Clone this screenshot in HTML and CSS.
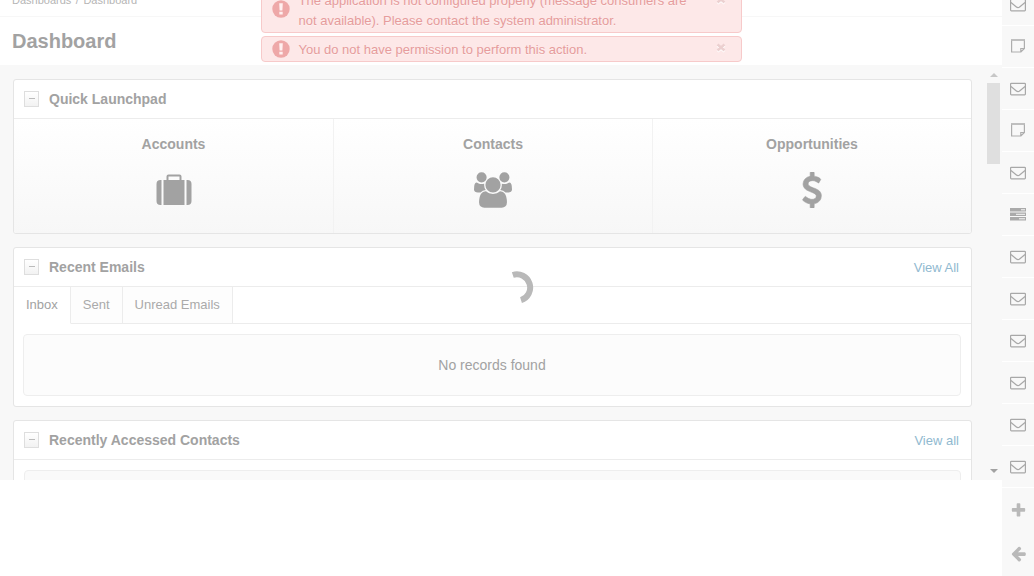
FILE: index.html
```
<!DOCTYPE html>
<html lang="en">
<head>
<meta charset="utf-8">
<title>Dashboard</title>
<link rel="stylesheet" href="styles.css">
</head>
<body>
<svg class="defs" aria-hidden="true">
  <symbol id="mail" viewBox="0 0 16 14"><rect x=".6" y="1.300" width="14.800" height="11.600" rx=".8" fill="none" stroke="#a8a8a8" stroke-width="1.200"/><path d="M1 4.500 6.400 9Q8 10.300 9.600 9L15 4.500" fill="none" stroke="#a8a8a8" stroke-width="1.200"/></symbol>
  <symbol id="note" viewBox="0 0 16 14"><path d="M1.600 1h12.800v8.500L10.900 13H1.600z M14.400 9.500h-3.600V13" fill="none" stroke="#adadad" stroke-width="1.200"/><path d="M1 1h14" stroke="#bbb" stroke-width="1.600"/></symbol>
  <symbol id="tasks" viewBox="0 0 16 14"><path d="M0 1h16v3.500H0zM0 5.500h16V9H0zM0 10h16v3.500H0z" fill="#aaa"/><path d="M11 2.800h4M6 7.300h9M9 11.800h6" stroke="#f8f8f8"/></symbol>
  <symbol id="alert" viewBox="0 0 18 18"><circle cx="9" cy="9" r="8.700" fill="#eea8a8"/><path d="M7.200 3.300h3.600l-.4 7.200H7.600zM7.300 11.800h3.400v2.800H7.300z" fill="#fff0f0"/></symbol>
  <symbol id="close" viewBox="0 0 10 10"><path d="M1.500 1.500l7 6M8.500 1.500l-7 6" stroke="#fff" stroke-width="2.600" transform="translate(0 1)"/><path d="M1.500 1.500l7 6M8.500 1.500l-7 6" stroke="#ecd0d0" stroke-width="2.400"/></symbol>
</svg>
<div class="app">
  <main class="main">
    <nav class="crumbs"><span>Dashboards</span><span>/</span><span>Dashboard</span></nav>
    <header class="title"><h1>Dashboard</h1></header>
    <div class="scroll">
      <div class="content">
        <section class="panel">
          <header class="head"><i class="toggle"></i><h2>Quick Launchpad</h2></header>
          <div class="tiles">
            <div class="tile"><span>Accounts</span>
              <svg width="36" height="36" viewBox="0 0 36 36"><path d="M5.500 8v25H4.500a4 4 0 0 1-4-4V12a4 4 0 0 1 4-4zM30.500 8v25h1a4 4 0 0 0 4-4V12a4 4 0 0 0-4-4zM7.500 8h3V4.500a2 2 0 0 1 2-2h11a2 2 0 0 1 2 2V8h3v25h-21zM12.500 8h11V4.500h-11z" fill-rule="evenodd"/></svg></div>
            <div class="tile"><span>Contacts</span>
              <svg width="38" height="36" viewBox="0 0 1920 1792"><path d="M593 896q-162 5-265 128h-134q-82 0-138-40.500t-56-118.500q0-353 124-353 6 0 43.500 21t97.500 42.500 119 21.500q67 0 133-23-5 37-5 66 0 139 81 256zm1071 637q0 120-73 189.500t-194 69.500h-874q-121 0-194-69.500t-73-189.500q0-53 3.500-103.500t14-109 26.500-108.500 43-97.500 62-81 85.500-53.500 111.500-20q10 0 43 21.500t73 48 107 48 135 21.500 135-21.500 107-48 73-48 43-21.500q61 0 111.500 20t85.500 53.500 62 81 43 97.500 26.500 108.500 14 109 3.500 103.500zm-1024-1277q0 106-75 181t-181 75-181-75-75-181 75-181 181-75 181 75 75 181zm704 384q0 159-112.500 271.500t-271.500 112.500-271.500-112.500-112.500-271.500 112.500-271.500 271.500-112.500 271.500 112.500 112.500 271.500zm576 225q0 78-56 118.500t-138 40.500h-134q-103-123-265-128 81-117 81-256 0-29-5-66 66 23 133 23 59 0 119-21.500t97.500-42.500 43.500-21q124 0 124 353zm-128-609q0 106-75 181t-181 75-181-75-75-181 75-181 181-75 181 75 75 181z"/></svg></div>
            <div class="tile"><span>Opportunities</span>
              <svg class="usd" width="36" height="36" viewBox="0 0 1792 1792"><path d="M1362 1185q0 153-99.500 263.500t-258.500 136.500v175q0 14-9 23t-23 9h-135q-13 0-22.500-9.500t-9.500-22.500v-175q-66-9-127.500-31t-101.500-44.500-74-48-46.500-37.500-17.500-18q-17-21-2-41l103-135q7-10 23-12 15-2 24 9l2 2q113 99 243 125 37 8 74 8 81 0 142.500-43t61.500-122q0-28-15-53t-33.500-42-58.500-37.500-66-32-80-32.500q-39-16-61.500-25t-61.500-26.500-62.500-31-56.500-35.500-53.500-42.500-43.500-49-35.500-58-21-66.500-8.500-78q0-138 98-242t255-134v-180q0-13 9.500-22.500t22.500-9.500h135q14 0 23 9t9 23v176q57 6 110.500 23t87 33.500 63.500 37.500 39 29 15 14q17 18 5 38l-81 146q-8 15-23 16-14 3-27-7-3-3-14.500-12t-39-26.500-58.500-32-74.500-26-85.500-11.500q-95 0-155 43t-60 111q0 26 8.500 48t29.500 41.500 39.500 33 56 31 60.500 27 70 27.500q53 20 81 31.500t76 35 75.500 42.500 62 50 53 63.500 31.500 76.500 13 94z"/></svg></div>
          </div>
        </section>
        <section class="panel emails">
          <header class="head"><i class="toggle"></i><h2>Recent Emails</h2><a>View All</a></header>
          <div class="tabs"><span class="tab active">Inbox</span><span class="tab">Sent</span><span class="tab">Unread Emails</span><span class="rest"></span></div>
          <div class="empty">No records found</div>
        </section>
        <section class="panel contacts">
          <header class="head"><i class="toggle"></i><h2>Recently Accessed Contacts</h2><a>View all</a></header>
          <div class="empty"></div>
        </section>
      </div>
      <div class="bar"><i class="up"></i><i class="thumb"></i><i class="down"></i></div>
    </div>
  </main>
  <aside class="side">
    <div class="cell first"><svg><use href="#mail"/></svg></div>
    <div class="cell"><svg class="note"><use href="#note"/></svg></div>
    <div class="cell"><svg><use href="#mail"/></svg></div>
    <div class="cell"><svg class="note"><use href="#note"/></svg></div>
    <div class="cell"><svg><use href="#mail"/></svg></div>
    <div class="cell"><svg class="tasks"><use href="#tasks"/></svg></div>
    <div class="cell"><svg><use href="#mail"/></svg></div>
    <div class="cell"><svg><use href="#mail"/></svg></div>
    <div class="cell"><svg><use href="#mail"/></svg></div>
    <div class="cell"><svg><use href="#mail"/></svg></div>
    <div class="cell"><svg><use href="#mail"/></svg></div>
    <div class="cell"><svg><use href="#mail"/></svg></div>
    <div class="tool"><svg class="big" viewBox="0 0 1792 1792"><path d="M1600 736v192q0 40-28 68t-68 28h-416v416q0 40-28 68t-68 28h-192q-40 0-68-28t-28-68v-416h-416q-40 0-68-28t-28-68v-192q0-40 28-68t68-28h416v-416q0-40 28-68t68-28h192q40 0 68 28t28 68v416h416q40 0 68 28t28 68z"/></svg></div>
    <div class="tool"><svg class="big" viewBox="0 0 1792 1792"><path d="M1664 896v128q0 53-32.500 90.500t-84.500 37.500h-704l293 294q38 36 38 90t-38 90l-75 76q-37 37-90 37-52 0-91-37l-651-652q-37-37-37-90 0-52 37-91l651-650q38-38 91-38 52 0 90 38l75 74q38 38 38 91t-38 91l-293 293h704q52 0 84.500 37.500t32.500 90.500z"/></svg></div>
  </aside>
</div>
<div class="messages">
  <div class="msg tall"><svg class="alert"><use href="#alert"/></svg><p>The application is not configured properly (message consumers are<br>not available). Please contact the system administrator.</p><svg class="x"><use href="#close"/></svg></div>
  <div class="msg"><svg class="alert"><use href="#alert"/></svg><p>You do not have permission to perform this action.</p><svg class="x"><use href="#close"/></svg></div>
</div>
<svg class="spinner" viewBox="0 0 34 34"><path d="M12.800 4A13.200 13.200 0 0 1 21 29.200" fill="none" stroke="#b9b9b9" stroke-width="6"/></svg>
</body>
</html>
```
FILE: styles.css
```
* { box-sizing: border-box; }
body { margin: 0; height: 576px; overflow: hidden; background: #fff; color: #a2a2a2; font: 13px/20px "Liberation Sans", Arial, sans-serif; }
.defs { position: absolute; width: 0; height: 0; }
h1, h2, p { margin: 0; }
.app { display: grid; grid-template-columns: 1002px 32px; height: 576px; }
.main { min-width: 0; }
.crumbs { height: 17px; padding-left: 12px; border-bottom: 1px solid #f7f7f7; display: flex; gap: 4.500px; font-size: 11px; line-height: 20px; color: #b5b5b5; }
.crumbs span { margin-top: -10px; }
.title { height: 48px; padding: 12px 12px 0; }
h1 { font-size: 20px; line-height: 24px; }
.scroll { height: 415px; background: #f8f8f8; overflow: hidden; display: flex; justify-content: space-between; }
.content { width: 959px; margin: 14px 0 0 13px; display: flex; flex-direction: column; gap: 13px; }
.panel { background: #fff; border: 1px solid #e5e5e5; border-radius: 3px; flex: none; overflow: hidden; height: 155px; }
.emails { height: 160px; }
.contacts { height: 170px; }
.head { height: 39px; border-bottom: 1px solid #ececec; display: flex; align-items: center; padding: 0 12px 0 10px; }
.toggle { width: 15px; height: 16px; border: 1px solid #dedede; background: linear-gradient(#fff, #f2f2f2); display: flex; align-items: center; justify-content: center; margin-right: 10px; }
.toggle::before { content: ""; width: 6px; height: 1px; background: #bbb; margin-top: -1px; }
h2 { font-size: 14px; line-height: 20px; flex: 1; }
.head a { color: #90b9d0; padding-top: 1px; }
.tiles { display: grid; grid-template-columns: 320px 319px 318px; height: 114px; background: linear-gradient(#fff, #f7f7f7); }
.tile { display: flex; flex-direction: column; align-items: center; padding-top: 15px; gap: 18px; font-size: 14px; font-weight: bold; border-right: 1px solid #f2f2f2; }
.tile:last-child { border-right: 0; }
.tile svg { fill: #a2a2a2; }
.tile .usd { stroke: #a2a2a2; stroke-width: 30px; }
.tabs { display: flex; height: 37px; line-height: 35px; }
.tab { padding: 0 12px; border-right: 1px solid #ececec; border-bottom: 1px solid #ececec; background: #fdfdfd; color: #aaa; }
.tab.active { background: #fff; border-bottom-color: #fff; color: #a2a2a2; }
.rest { flex: 1; border-bottom: 1px solid #ececec; }
.empty { height: 62px; margin: 10px 10px 0 9px; border: 1px solid #eee; border-radius: 4px; background: #fcfcfc; font-size: 14px; line-height: 60px; text-align: center; }
.contacts .empty { margin-left: 10px; background: #fafafa; }
.bar { width: 17px; display: flex; flex-direction: column; align-items: center; padding-top: 8px; }
.up { border: 4px solid transparent; border-top: 0; border-bottom-color: #c7c7c7; margin-bottom: 6px; }
.thumb { width: 13px; height: 81px; background: #dfdfdf; }
.down { border: 4px solid transparent; border-bottom: 0; border-top-color: #a2a2a2; margin-top: 305px; }
.side { background: #f8f8f8; }
.cell { height: 42px; border-bottom: 1px solid #fff; display: flex; align-items: center; justify-content: center; }
.cell.first { height: 26px; padding-bottom: 15px; }
.cell svg { width: 16px; height: 14px; }
.cell .note, .cell .tasks { margin-bottom: 2px; }
.tool { height: 44px; display: flex; justify-content: center; align-items: center; }
.tool + .tool { height: 43px; }
.big { width: 17px; height: 17px; fill: #b9b9b9; }
.messages { position: absolute; left: 261px; top: -19px; width: 481px; display: grid; gap: 3px; }
.msg { height: 26px; border: 1px solid #f7caca; border-radius: 4px; background: #fde8e8; color: #e69c9c; text-shadow: 0 1px 0 #fff6; display: flex; align-items: center; padding: 0 15px 0 10px; }
.msg p { flex: 1; padding-top: 1px; }
.msg.tall { height: 52px; }
.msg.tall p { padding-top: 7px; }
.alert { width: 18px; height: 18px; margin-right: 8.500px; }
.tall .alert { margin-top: 3px; }
.x { width: 10px; height: 10px; margin-top: -3px; }
.tall .x { margin-top: -14px; }
.spinner { position: absolute; left: 500px; top: 271px; width: 34px; height: 34px; }
```
